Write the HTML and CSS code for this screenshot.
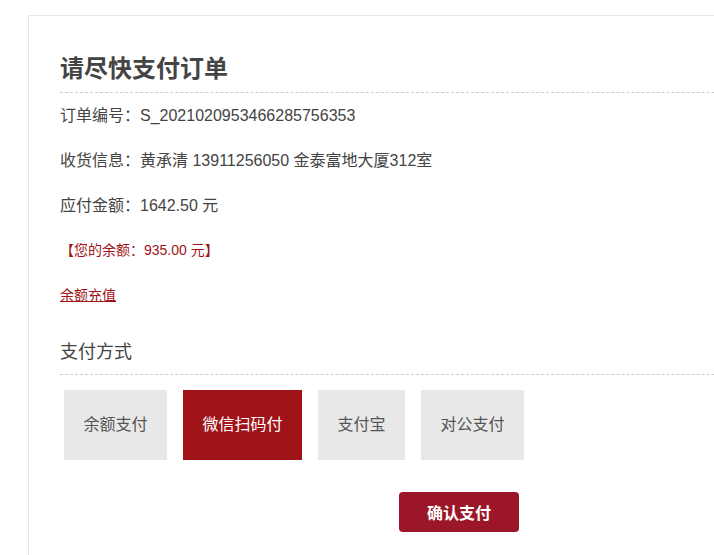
FILE: index.html
```html
<!DOCTYPE html>
<html lang="zh-CN">
<head>
  <meta charset="UTF-8">
  <meta name="viewport" content="width=device-width, initial-scale=1.0">
  <title>支付订单</title>
  <link rel="stylesheet" href="styles.css">
</head>
<body>
  <div class="page">
    <section class="pay-box">
      <h1 class="pay-title">请尽快支付订单</h1>
      <div class="order-info">
        <p>订单编号：S_2021020953466285756353</p>
        <p>收货信息：黄承清 13911256050 金泰富地大厦312室</p>
        <p>应付金额：1642.50 元</p>
        <p class="balance">【您的余额：935.00 元】</p>
        <p class="recharge"><a href="#">余额充值</a></p>
      </div>
      <h2 class="pay-sub">支付方式</h2>
      <ul class="pay-ways">
        <li>余额支付</li>
        <li class="active">微信扫码付</li>
        <li>支付宝</li>
        <li>对公支付</li>
      </ul>
      <div class="pay-actions">
        <button class="btn-confirm">确认支付</button>
      </div>
    </section>
  </div>
</body>
</html>
```

FILE: styles.css
```css
:root {
  --text-dark: #444;
  --brand-red: #a01318;
  --btn-red: #9b1628;
  --line: #ccc;
}
html, body { margin: 0; overflow: hidden; }
body {
  font-family: "Liberation Sans", "Noto Sans CJK SC", sans-serif;
  color: var(--text-dark);
  background: #fff;
}
.page { padding: 15px 0 0 28px; }
.pay-box {
  width: 800px;
  min-height: 600px;
  border: 1px solid #e6e6e6;
  padding: 37px 0 0 31px;
}
.pay-title {
  margin: 0;
  font-size: 24px;
  line-height: 32px;
  font-weight: bold;
  padding-bottom: 7px;
  border-bottom: 1px dashed var(--line);
}
.order-info p { margin: 0; font-size: 16px; line-height: 45px; }
.order-info .balance { font-size: 14px; color: var(--brand-red); }
.order-info .recharge { font-size: 14px; }
.recharge a { color: var(--brand-red); text-decoration: underline; }
.pay-sub {
  margin: 19px 0 0;
  font-size: 18px;
  font-weight: normal;
  line-height: 30px;
  padding-bottom: 7px;
  border-bottom: 1px dashed var(--line);
}
.pay-ways {
  list-style: none;
  margin: 15px 0 0;
  padding: 0 0 0 4px;
  display: flex;
  gap: 16px;
}
.pay-ways li {
  height: 70px;
  line-height: 70px;
  padding: 0 19.5px;
  background: #e8e8e8;
  color: #555;
  font-size: 16px;
}
.pay-ways li.active { background: var(--brand-red); color: #fff; }
.pay-actions { padding: 32px 0 0 339px; }
.btn-confirm {
  width: 120px;
  height: 40px;
  border: 0;
  border-radius: 4px;
  background: var(--btn-red);
  color: #fff;
  font-family: inherit;
  font-size: 16px;
  font-weight: bold;
}
```
